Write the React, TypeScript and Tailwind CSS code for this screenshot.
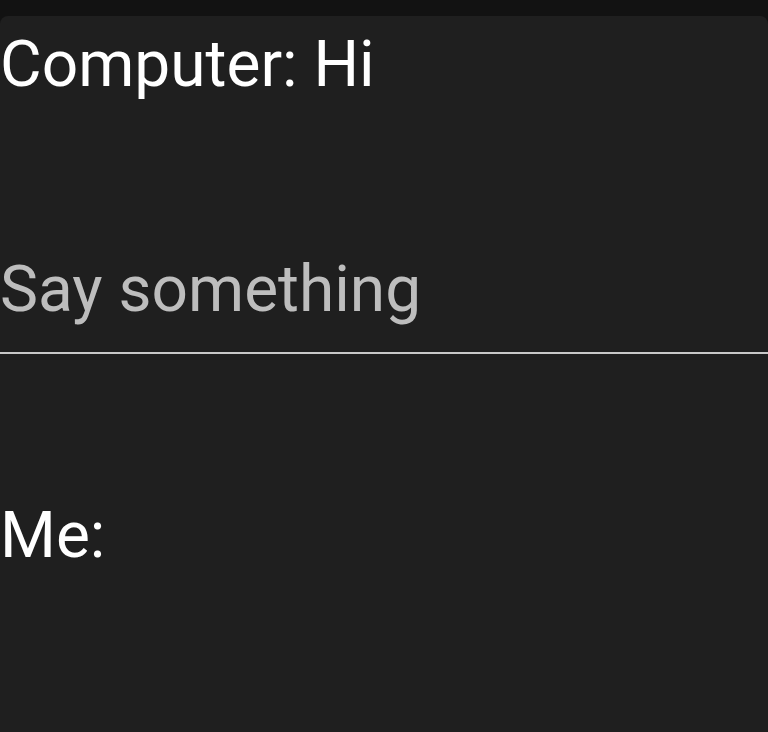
export default function App() {
  return (
    <div className="w-[768px] h-[732px] bg-[#121212] overflow-hidden" style={{ fontFamily: "Roboto, 'Noto Sans', sans-serif" }}>
      <div className="h-4" />
      <div className="h-[716px] bg-[#1f1f1f] rounded-t-[8px]">
        <div className="pt-[11px] text-[64px] leading-[75px] text-white">Computer: Hi</div>
        <div className="mt-[150px] text-[64px] leading-[75px] text-[#bdbdbd]">Say something</div>
        <div className="mt-[25px] h-[2px] bg-[#c8c8c8]" />
        <div className="mt-[144px] text-[64px] leading-[75px] text-white">Me:</div>
      </div>
    </div>
  );
}
